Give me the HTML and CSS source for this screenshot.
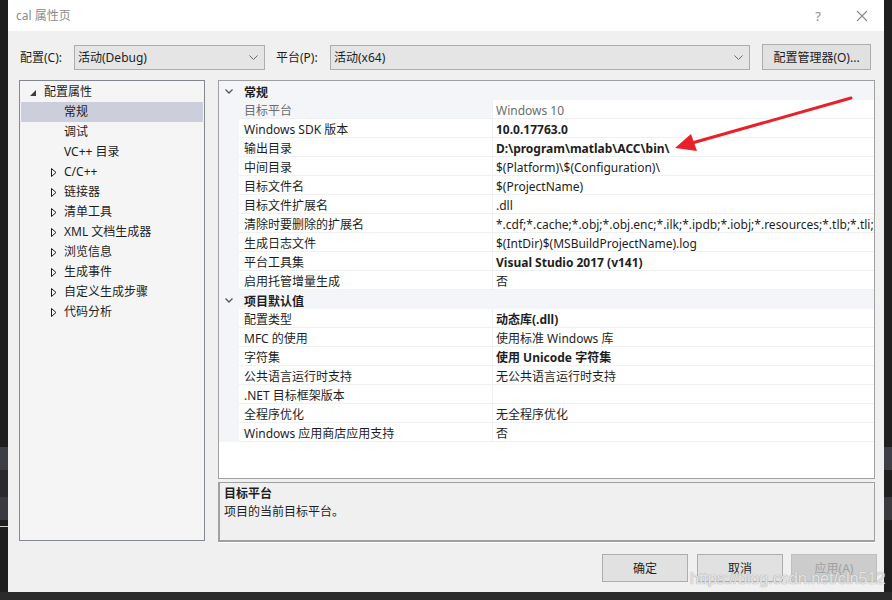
FILE: index.html
```html
<!DOCTYPE html>
<html lang="zh-CN">
<head>
<meta charset="utf-8">
<title>cal 属性页</title>
<link rel="stylesheet" href="styles.css">
</head>
<body>
<div class="screen">
  <div class="strip strip-left">
    <div class="sblk s1"></div>
    <div class="sblk s2"></div>
    <div class="sblk s3"></div>
    <div class="sblk s4"></div>
  </div>
  <div class="dialog">
    <div class="titlebar">
      <span class="title">cal 属性页</span>
      <span class="tb-help">?</span>
      <svg class="tb-close" width="12" height="12" viewBox="0 0 12 12"><path d="M1 1L11 11M11 1L1 11" stroke="#8a8a8a" stroke-width="1.1" fill="none"/></svg>
    </div>
    <div class="body">
      <div class="configrow">
        <span class="lbl lbl1">配置(C):</span>
        <div class="combo combo1"><span>活动(Debug)</span><svg width="9" height="5" viewBox="0 0 9 5"><path d="M0.5 0.5L4.5 4.5L8.5 0.5" stroke="#6a6a6a" fill="none"/></svg></div>
        <span class="lbl lbl2">平台(P):</span>
        <div class="combo combo2"><span>活动(x64)</span><svg width="9" height="5" viewBox="0 0 9 5"><path d="M0.5 0.5L4.5 4.5L8.5 0.5" stroke="#6a6a6a" fill="none"/></svg></div>
        <div class="btn btn-mgr">配置管理器(O)...</div>
      </div>
      <div class="main">
        <div class="tree">
          <div class="titem root"><svg class="exp-root" width="6" height="6" viewBox="0 0 6 6"><polygon points="6,0 6,6 0,6" fill="#3c3c3c"/></svg><span>配置属性</span></div>
          <div class="titem child sel"><span>常规</span></div>
          <div class="titem child"><span>调试</span></div>
          <div class="titem child"><span>VC++ 目录</span></div>
          <div class="titem child exp"><svg class="exp" width="6" height="9" viewBox="0 0 6 9"><polygon points="0.5,0.5 5,4.5 0.5,8.5" fill="none" stroke="#1e1e1e"/></svg><span>C/C++</span></div>
          <div class="titem child exp"><svg class="exp" width="6" height="9" viewBox="0 0 6 9"><polygon points="0.5,0.5 5,4.5 0.5,8.5" fill="none" stroke="#1e1e1e"/></svg><span>链接器</span></div>
          <div class="titem child exp"><svg class="exp" width="6" height="9" viewBox="0 0 6 9"><polygon points="0.5,0.5 5,4.5 0.5,8.5" fill="none" stroke="#1e1e1e"/></svg><span>清单工具</span></div>
          <div class="titem child exp"><svg class="exp" width="6" height="9" viewBox="0 0 6 9"><polygon points="0.5,0.5 5,4.5 0.5,8.5" fill="none" stroke="#1e1e1e"/></svg><span>XML 文档生成器</span></div>
          <div class="titem child exp"><svg class="exp" width="6" height="9" viewBox="0 0 6 9"><polygon points="0.5,0.5 5,4.5 0.5,8.5" fill="none" stroke="#1e1e1e"/></svg><span>浏览信息</span></div>
          <div class="titem child exp"><svg class="exp" width="6" height="9" viewBox="0 0 6 9"><polygon points="0.5,0.5 5,4.5 0.5,8.5" fill="none" stroke="#1e1e1e"/></svg><span>生成事件</span></div>
          <div class="titem child exp"><svg class="exp" width="6" height="9" viewBox="0 0 6 9"><polygon points="0.5,0.5 5,4.5 0.5,8.5" fill="none" stroke="#1e1e1e"/></svg><span>自定义生成步骤</span></div>
          <div class="titem child exp"><svg class="exp" width="6" height="9" viewBox="0 0 6 9"><polygon points="0.5,0.5 5,4.5 0.5,8.5" fill="none" stroke="#1e1e1e"/></svg><span>代码分析</span></div>
        </div>
        <div class="rightcol">
          <div class="grid">
            <div class="cat"><svg class="chev" width="8" height="5" viewBox="0 0 8 5"><path d="M0.5 0.5L4 4L7.5 0.5" stroke="#555" stroke-width="1.3" fill="none"/></svg><span>常规</span></div>
            <div class="prow selrow"><div class="gut"></div><div class="pname dim">目标平台</div><div class="pval dim">Windows 10</div></div>
            <div class="prow"><div class="gut"></div><div class="pname">Windows SDK 版本</div><div class="pval b">10.0.17763.0</div></div>
            <div class="prow"><div class="gut"></div><div class="pname">输出目录</div><div class="pval b">D:\program\matlab\ACC\bin\</div></div>
            <div class="prow"><div class="gut"></div><div class="pname">中间目录</div><div class="pval">$(Platform)\$(Configuration)\</div></div>
            <div class="prow"><div class="gut"></div><div class="pname">目标文件名</div><div class="pval">$(ProjectName)</div></div>
            <div class="prow"><div class="gut"></div><div class="pname">目标文件扩展名</div><div class="pval">.dll</div></div>
            <div class="prow"><div class="gut"></div><div class="pname">清除时要删除的扩展名</div><div class="pval">*.cdf;*.cache;*.obj;*.obj.enc;*.ilk;*.ipdb;*.iobj;*.resources;*.tlb;*.tli;*.t</div></div>
            <div class="prow"><div class="gut"></div><div class="pname">生成日志文件</div><div class="pval">$(IntDir)$(MSBuildProjectName).log</div></div>
            <div class="prow"><div class="gut"></div><div class="pname">平台工具集</div><div class="pval b">Visual Studio 2017 (v141)</div></div>
            <div class="prow"><div class="gut"></div><div class="pname">启用托管增量生成</div><div class="pval">否</div></div>
            <div class="cat"><svg class="chev" width="8" height="5" viewBox="0 0 8 5"><path d="M0.5 0.5L4 4L7.5 0.5" stroke="#555" stroke-width="1.3" fill="none"/></svg><span>项目默认值</span></div>
            <div class="prow"><div class="gut"></div><div class="pname">配置类型</div><div class="pval b">动态库(.dll)</div></div>
            <div class="prow"><div class="gut"></div><div class="pname">MFC 的使用</div><div class="pval">使用标准 Windows 库</div></div>
            <div class="prow"><div class="gut"></div><div class="pname">字符集</div><div class="pval b">使用 Unicode 字符集</div></div>
            <div class="prow"><div class="gut"></div><div class="pname">公共语言运行时支持</div><div class="pval">无公共语言运行时支持</div></div>
            <div class="prow"><div class="gut"></div><div class="pname">.NET 目标框架版本</div><div class="pval"></div></div>
            <div class="prow"><div class="gut"></div><div class="pname">全程序优化</div><div class="pval">无全程序优化</div></div>
            <div class="prow"><div class="gut"></div><div class="pname">Windows 应用商店应用支持</div><div class="pval">否</div></div>
          </div>
          <div class="desc">
            <div class="desc-title">目标平台</div>
            <div class="desc-text">项目的当前目标平台。</div>
          </div>
        </div>
      </div>
      <div class="btnrow">
        <div class="btn dbtn">确定</div>
        <div class="btn dbtn">取消</div>
        <div class="btn dbtn disabled">应用(A)</div>
      </div>
    </div>
  </div>
  <div class="strip strip-right">
    <div class="sblk r1"></div>
    <div class="sblk r2"></div>
  </div>
  <svg class="arrow" width="892" height="600" viewBox="0 0 892 600">
    <line x1="851" y1="98" x2="692" y2="143" stroke="#e8202a" stroke-width="3" stroke-linecap="round"/>
    <polygon points="675,148 697,151 691,134" fill="#e8202a"/>
  </svg>
  <div class="watermark">https://blog.csdn.net/cln512</div>
</div>
</body>
</html>
```
FILE: styles.css
```css
* { box-sizing: border-box; }
html, body { margin: 0; padding: 0; }
body {
  width: 892px;
  height: 600px;
  overflow: hidden;
  background: #2b2b2b;
  font-family: "Noto Sans", "Noto Sans CJK SC", sans-serif;
  font-size: 12px;
  color: #1e1e1e;
}
.screen {
  position: relative;
  width: 892px;
  height: 600px;
  display: flex;
  align-items: flex-start;
}
.strip { height: 592px; display: flex; flex-direction: column; }
.strip-left { width: 8px; background: #1e1e1e; }
.strip-right { width: 8px; background: #1f1f1f; }
.s1 { margin-top: 447px; height: 23px; background: #3e3e45; }
.s2 { height: 27px; background: #2a2a2e; }
.s3 { height: 23px; background: #3a3a40; }
.s4 { margin-top: 6px; height: 1px; background: #d0d0d0; }
.r1 { margin-top: 447px; height: 23px; background: #3e3e45; }
.r2 { margin-top: 27px; height: 23px; background: #3a3a40; }

.dialog {
  width: 876px;
  height: 592px;
  background: #f0f0f0;
  display: flex;
  flex-direction: column;
}
.titlebar {
  height: 31px;
  background: #ffffff;
  display: flex;
  align-items: center;
  padding-left: 8px;
  flex-shrink: 0;
}
.title { color: #8c8c8c; font-size: 12px; flex: 1; line-height: 16px; }
.tb-help { color: #8a8a8a; font-size: 13px; margin-right: 35px; }
.tb-close { margin-right: 16px; }

.body { flex: 1; display: flex; flex-direction: column; }

.configrow {
  display: flex;
  align-items: center;
  padding-left: 12px;
  margin-top: 13px;
  height: 26px;
}
.lbl { width: 54px; line-height: 16px; padding-top: 1px; }
.lbl2 { margin-left: 11px; }
.combo {
  height: 25px;
  background: #e5e5e5;
  border: 1px solid #adadad;
  display: flex;
  align-items: center;
  justify-content: space-between;
  padding: 1px 6px 0 3px;
  line-height: 16px;
}
.combo1 { width: 191px; }
.combo2 { width: 420px; }
.btn {
  background: #e1e1e1;
  border: 1px solid #adadad;
  display: flex;
  align-items: center;
  justify-content: center;
  line-height: 16px;
  padding-top: 1px;
}
.btn-mgr { width: 109px; height: 26px; margin-left: 12px; }

.main {
  display: flex;
  margin-top: 10px;
  align-items: flex-start;
}
.tree {
  margin-left: 11px;
  width: 186px;
  height: 461px;
  background: #f5f5f5;
  border: 1px solid #828790;
  padding: 1px 1px 0 1px;
}
.titem {
  height: 20px;
  display: flex;
  align-items: center;
  line-height: 16px;
  white-space: nowrap;
}
.titem.root { padding-left: 9px; }
.exp-root { margin-right: 8px; margin-top: 2px; }
.titem.child { padding-left: 43px; }
.titem.child.exp { padding-left: 30px; }
.exp { margin-right: 7px; }
.titem.sel { background: #cccedb; }

.rightcol {
  margin-left: 13px;
  width: 657px;
  display: flex;
  flex-direction: column;
}
.grid {
  height: 399px;
  background: #ffffff;
  border: 1px solid #a0a0a0;
  overflow: hidden;
}
.cat {
  height: 19px;
  background: #f3f5f9;
  display: flex;
  align-items: center;
  font-weight: bold;
  line-height: 15px;
  padding-top: 3px;
}
.chev { margin-left: 6px; margin-right: 11px; margin-top: -2px; }
.prow {
  height: 19px;
  display: grid;
  grid-template-columns: 20px 254px 1fr;
}
.gut { background: #f3f5f9; }
.pname, .pval {
  border-bottom: 1px solid #eef0f4;
  line-height: 15px;
  padding-top: 3px;
  white-space: nowrap;
  overflow: hidden;
}
.pname { padding-left: 5px; border-right: 1px solid #eef0f4; }
.pval { padding-left: 3px; }
.selrow .pname { background: #f3f5f9; }
.dim { color: #6d6d6d; }
.b { font-weight: bold; }

.desc {
  margin-top: 3px;
  height: 60px;
  background: #f0f0f0;
  border: 1px solid #a0a0a0;
  border-left-width: 2px;
  border-bottom-width: 2px;
  box-shadow: 0 1px 0 #ffffff;
  padding: 2px 0 0 4px;
}
.desc-title { font-weight: bold; line-height: 18px; }
.desc-text { line-height: 18px; }

.btnrow {
  display: flex;
  justify-content: flex-end;
  padding-right: 7px;
  margin-top: 12px;
  gap: 9px;
}
.dbtn { width: 86px; height: 28px; }
.dbtn.disabled { background: #cccccc; border-color: #bfbfbf; color: #a0a0a0; margin-left: -1px; }

.arrow { position: absolute; left: 0; top: 0; pointer-events: none; }
.watermark {
  position: absolute;
  left: 690px;
  top: 569px;
  font-family: "Liberation Sans", Arial, sans-serif;
  font-size: 16.5px;
  color: rgba(255, 255, 255, 0.7);
  text-shadow: 0 0 1px #a8a8a8, 0 0 1px #a8a8a8;
  letter-spacing: -0.2px;
  white-space: nowrap;
}
```
